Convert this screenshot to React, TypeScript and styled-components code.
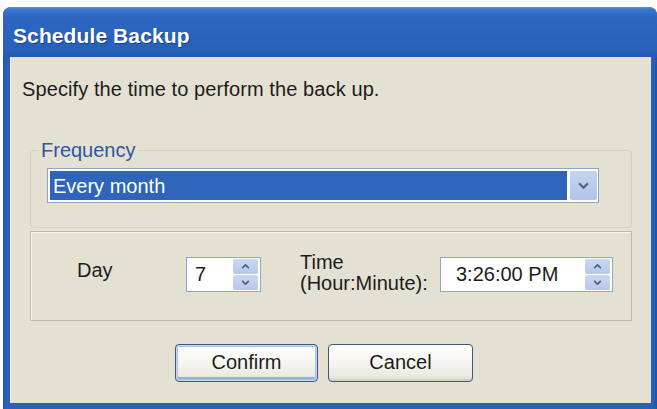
import React from "react";
import styled, { createGlobalStyle } from "styled-components";

const Global = createGlobalStyle`
  html, body { margin: 0; padding: 0; background: #ffffff; }
  body { font-family: "Liberation Sans", Arial, sans-serif; }
  * { box-sizing: border-box; }
`;

const Window = styled.div`
  margin: 7px 0 0 3px;
  width: 654px;
  height: 402px;
  display: flex;
  flex-direction: column;
  border-radius: 8px 8px 0 0;
  overflow: hidden;
  background: linear-gradient(to right, #1f52a6 0px, #2a60b8 3px, #2a60b8 651px, #1f52a6 654px);
`;

const TitleBar = styled.div`
  height: 50px;
  flex: none;
  display: flex;
  align-items: center;
  padding: 7px 0 0 10px;
  background: linear-gradient(
    to bottom,
    #5a90dc 0px,
    #3a74cc 3px,
    #2d67c2 10px,
    #2a63bd 30px,
    #2660b9 44px,
    #2459b0 50px
  );
  color: #ffffff;
  font: bold 21px "Liberation Sans", Arial, sans-serif;
  text-shadow: 1px 1px 0 #163f86;
  letter-spacing: 0.1px;
`;

const Body = styled.div`
  flex: 1;
  margin: 0 6px 6px 7px;
  background: #e5e1d2;
  box-shadow: inset 1px 0 0 #f2efe6;
  display: flex;
  flex-direction: column;
  padding-top: 22px;
  color: #1c1c1c;
  font: 20px "Liberation Sans", Arial, sans-serif;
`;

const Instruction = styled.div`
  margin-left: 12px;
  line-height: 20px;
  letter-spacing: 0.1px;
`;

const Group = styled.fieldset`
  margin: 41px 19px 0 20px;
  padding: 8px 32px 24px 16px;
  border: 1px solid #d3d0c0;
  border-radius: 4px;
  min-width: 0;
`;

const Legend = styled.legend`
  margin-left: -8px;
  padding: 0 2px;
  line-height: 20px;
  color: #2c56a6;
`;

const Combo = styled.div`
  height: 35px;
  border: 1px solid #8ea5c4;
  background: #ffffff;
  padding: 2px 1px 2px 2px;
  display: flex;
  gap: 3px;
`;

const Selected = styled.div`
  flex: 1;
  background: #2e64b9;
  color: #ffffff;
  padding-left: 3px;
  display: flex;
  align-items: center;
  line-height: 20px;
`;

const DropButton = styled.div`
  width: 27px;
  border-radius: 2px;
  background: linear-gradient(to bottom, #c4d4f1, #b0c4ea);
  display: flex;
  align-items: center;
  justify-content: center;
`;

const Panel = styled.div`
  margin: 3px 19px 0 20px;
  height: 90px;
  border: 1px solid #bdbaab;
  box-shadow: inset 1px 1px 0 #f7f5ee;
  display: flex;
  align-items: center;
  padding: 0 0 3px 46px;
`;

const DayLabel = styled.div`
  width: 109px;
  line-height: 21px;
  margin-bottom: 9px;
`;

const TimeLabel = styled.div`
  margin-left: 39px;
  width: 140px;
  line-height: 21px;
  margin-bottom: 4px;
`;

const Spin = styled.div<{ $w: number; $pad: number }>`
  width: ${(p) => p.$w}px;
  height: 35px;
  border: 1px solid #8ea5c4;
  background: #ffffff;
  display: flex;
  padding: 1px 2px 1px 0;
  span {
    flex: 1;
    padding-left: ${(p) => p.$pad}px;
    display: flex;
    align-items: center;
  }
`;

const SpinButtons = styled.div`
  width: 25px;
  display: flex;
  flex-direction: column;
  gap: 1px;
`;

const SpinButton = styled.div`
  flex: 1;
  border-radius: 2px;
  background: linear-gradient(to bottom, #cad8f3, #b5c8ec);
  display: flex;
  align-items: center;
  justify-content: center;
`;

const Buttons = styled.div`
  margin-top: 23px;
  padding-left: 165px;
  display: flex;
  gap: 10px;
`;

const Button = styled.button<{ $w: number; $default?: boolean }>`
  width: ${(p) => p.$w}px;
  height: 38px;
  border: 1px solid #3f5680;
  border-radius: 4px;
  background: linear-gradient(to bottom, #ffffff 0%, #f6f5f0 50%, #ebe9e0 85%, #dcd8cc 100%);
  box-shadow: ${(p) =>
    p.$default
      ? "inset 0 0 0 1px #c6d7f4, inset 0 0 0 2px #a9c1ea, inset 0 -2px 0 2px #98b2e2"
      : "inset 0 -2px 0 0 #d6d2c4"};
  font: 20px "Liberation Sans", Arial, sans-serif;
  color: #1c1c1c;
  padding: 0 0 2px;
`;

const Chevron = ({ up, w = 10, h = 6 }: { up?: boolean; w?: number; h?: number }) => (
  <svg width={w} height={h} viewBox="0 0 10 6">
    <polyline
      points={up ? "1,5 5,1 9,5" : "1,1 5,5 9,1"}
      fill="none"
      stroke="#4c6186"
      strokeWidth="2"
    />
  </svg>
);

const SpinControl = ({ value, w, pad }: { value: string; w: number; pad: number }) => (
  <Spin $w={w} $pad={pad}>
    <span>{value}</span>
    <SpinButtons>
      <SpinButton>
        <Chevron up w={9} h={5} />
      </SpinButton>
      <SpinButton>
        <Chevron w={9} h={5} />
      </SpinButton>
    </SpinButtons>
  </Spin>
);

export default function App() {
  return (
    <>
      <Global />
      <Window>
        <TitleBar>Schedule Backup</TitleBar>
        <Body>
          <Instruction>Specify the time to perform the back up.</Instruction>
          <Group>
            <Legend>Frequency</Legend>
            <Combo>
              <Selected>Every month</Selected>
              <DropButton>
                <Chevron w={11} h={7} />
              </DropButton>
            </Combo>
          </Group>
          <Panel>
            <DayLabel>Day</DayLabel>
            <SpinControl value="7" w={75} pad={8} />
            <TimeLabel>
              Time
              <br />
              (Hour:Minute):
            </TimeLabel>
            <SpinControl value="3:26:00 PM" w={173} pad={15} />
          </Panel>
          <Buttons>
            <Button $w={143} $default>
              Confirm
            </Button>
            <Button $w={145}>Cancel</Button>
          </Buttons>
        </Body>
      </Window>
    </>
  );
}
